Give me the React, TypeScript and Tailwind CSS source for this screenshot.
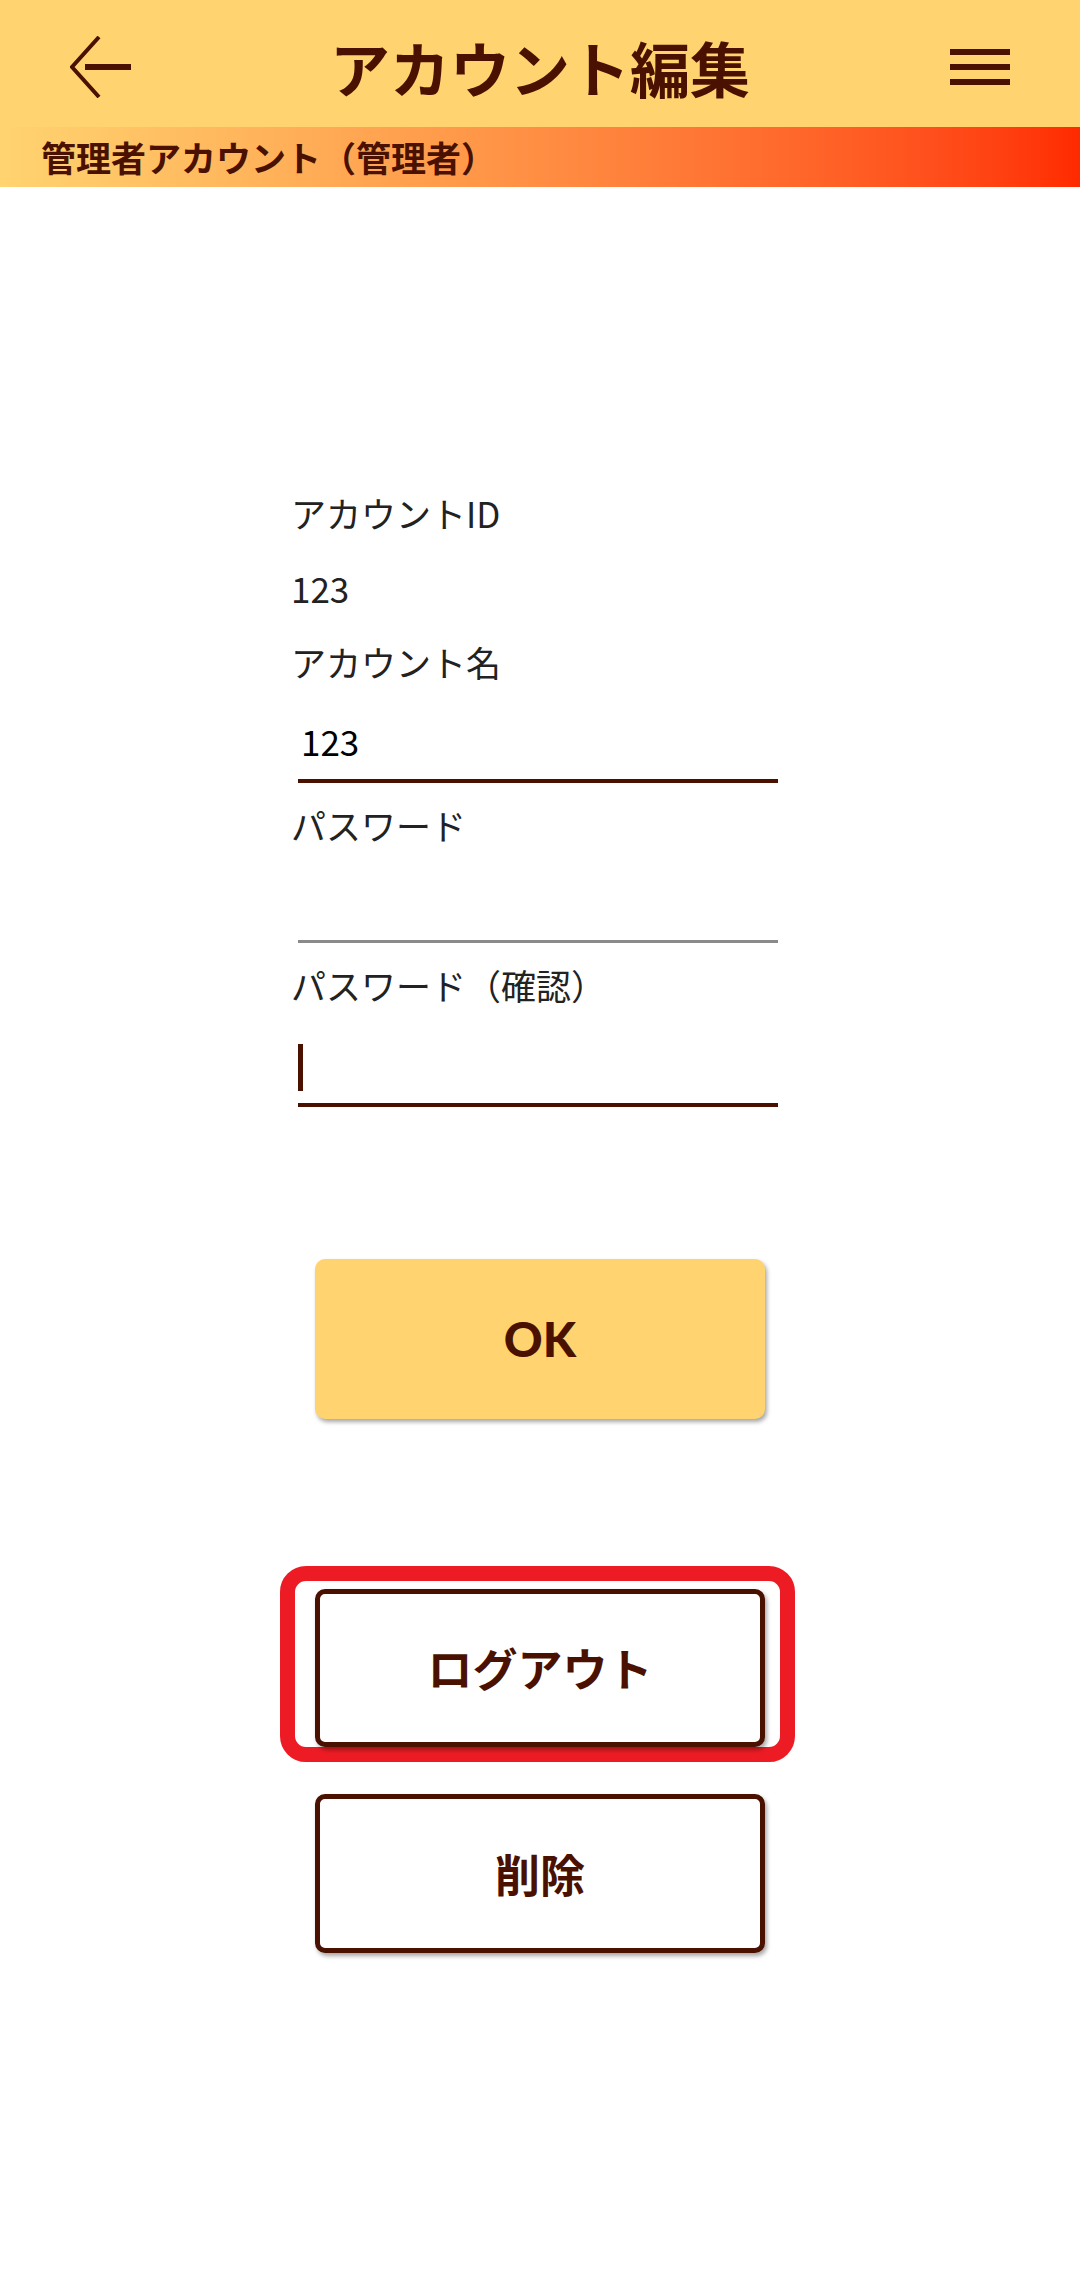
import React from "react";

const brown = "text-[#4A1100]";

function BackArrow() {
  return (
    <svg width="62" height="62" viewBox="0 0 62 62" className="block">
      <polyline points="29,1 2,31 29,61" fill="none" stroke="#4A1100" strokeWidth="4" />
      <rect x="15" y="28" width="46" height="6" fill="#4A1100" />
    </svg>
  );
}

function MenuIcon() {
  return (
    <svg width="60" height="36" viewBox="0 0 60 36" className="block">
      <rect x="0" y="0" width="60" height="6" fill="#4A1100" />
      <rect x="0" y="15" width="60" height="6" fill="#4A1100" />
      <rect x="0" y="30" width="60" height="6" fill="#4A1100" />
    </svg>
  );
}

function Label({ text, className = "" }: { text: string; className?: string }) {
  return (
    <div className={`h-[50px] leading-[50px] text-[35px] text-[#222222] ${className}`}>
      {text}
    </div>
  );
}

export default function App() {
  return (
    <div className="w-[1080px] min-h-[2290px] bg-white font-['Noto_Sans_CJK_JP','Noto_Sans',sans-serif]">
      {/* ヘッダー */}
      <header className="h-[127px] bg-[#FFD470] flex items-center pt-[6px]">
        <div className="w-[200px] pl-[70px]">
          <BackArrow />
        </div>
        <h1 className={`flex-1 text-center text-[60px] font-bold leading-none ${brown}`}>
          アカウント編集
        </h1>
        <div className="w-[200px] pr-[70px] flex justify-end">
          <MenuIcon />
        </div>
      </header>
      <div className={`h-[60px] bg-linear-to-r from-[#FFD470] to-[#FF2A00] flex items-center pl-[41px] text-[35px] font-bold ${brown}`}>
        管理者アカウント（管理者）
      </div>

      {/* フォーム */}
      <div className="w-[494px] ml-[291px] pt-[301px]">
        <Label text="アカウントID" />
        <div className="mt-[25px] h-[50px] leading-[50px] text-[35px] text-[#222222]">123</div>
        <Label text="アカウント名" className="mt-[24px]" />
        <div className="mx-[7px] h-[96px] border-b-4 border-[#4A1100] flex items-end pb-[14px]">
          <div className="h-[48px] leading-[48px] text-[35px] text-black pl-[3px]">123</div>
        </div>
        <Label text="パスワード" className="mt-[17px]" />
        <div className="mx-[7px] h-[93px] border-b-[3px] border-[#8A8A8A]" />
        <Label text="パスワード（確認）" className="mt-[17px]" />
        <div className="mx-[7px] h-[97px] border-b-4 border-[#4A1100] flex items-end pb-[12px]">
          <div className="w-[5px] h-[47px] bg-[#4A1100]" />
        </div>
      </div>

      {/* ボタン */}
      <div className="flex flex-col items-center">
        <button className="mt-[152px] w-[450px] h-[160px] rounded-[10px] bg-[#FFD470] shadow-[2px_3px_4px_rgba(0,0,0,0.35)] flex items-center justify-center">
          <span className={`font-['Lato',sans-serif] font-black text-[48px] leading-none ${brown}`}>OK</span>
        </button>

        <div className="self-start ml-[280px] mt-[147px] border-[15px] border-[#ED1C24] rounded-[26px] pl-[20px] pr-[15px] pt-[8px]">
          <button className={`block w-[450px] h-[158px] rounded-[10px] border-[5px] border-[#4A1100] bg-white shadow-[2px_3px_4px_rgba(0,0,0,0.35)] text-[45px] font-bold ${brown}`}>
            ログアウト
          </button>
        </div>

        <button className={`mt-[32px] w-[450px] h-[159px] rounded-[10px] border-[5px] border-[#4A1100] bg-white shadow-[2px_3px_4px_rgba(0,0,0,0.35)] text-[45px] font-bold ${brown}`}>
          削除
        </button>
      </div>
    </div>
  );
}
